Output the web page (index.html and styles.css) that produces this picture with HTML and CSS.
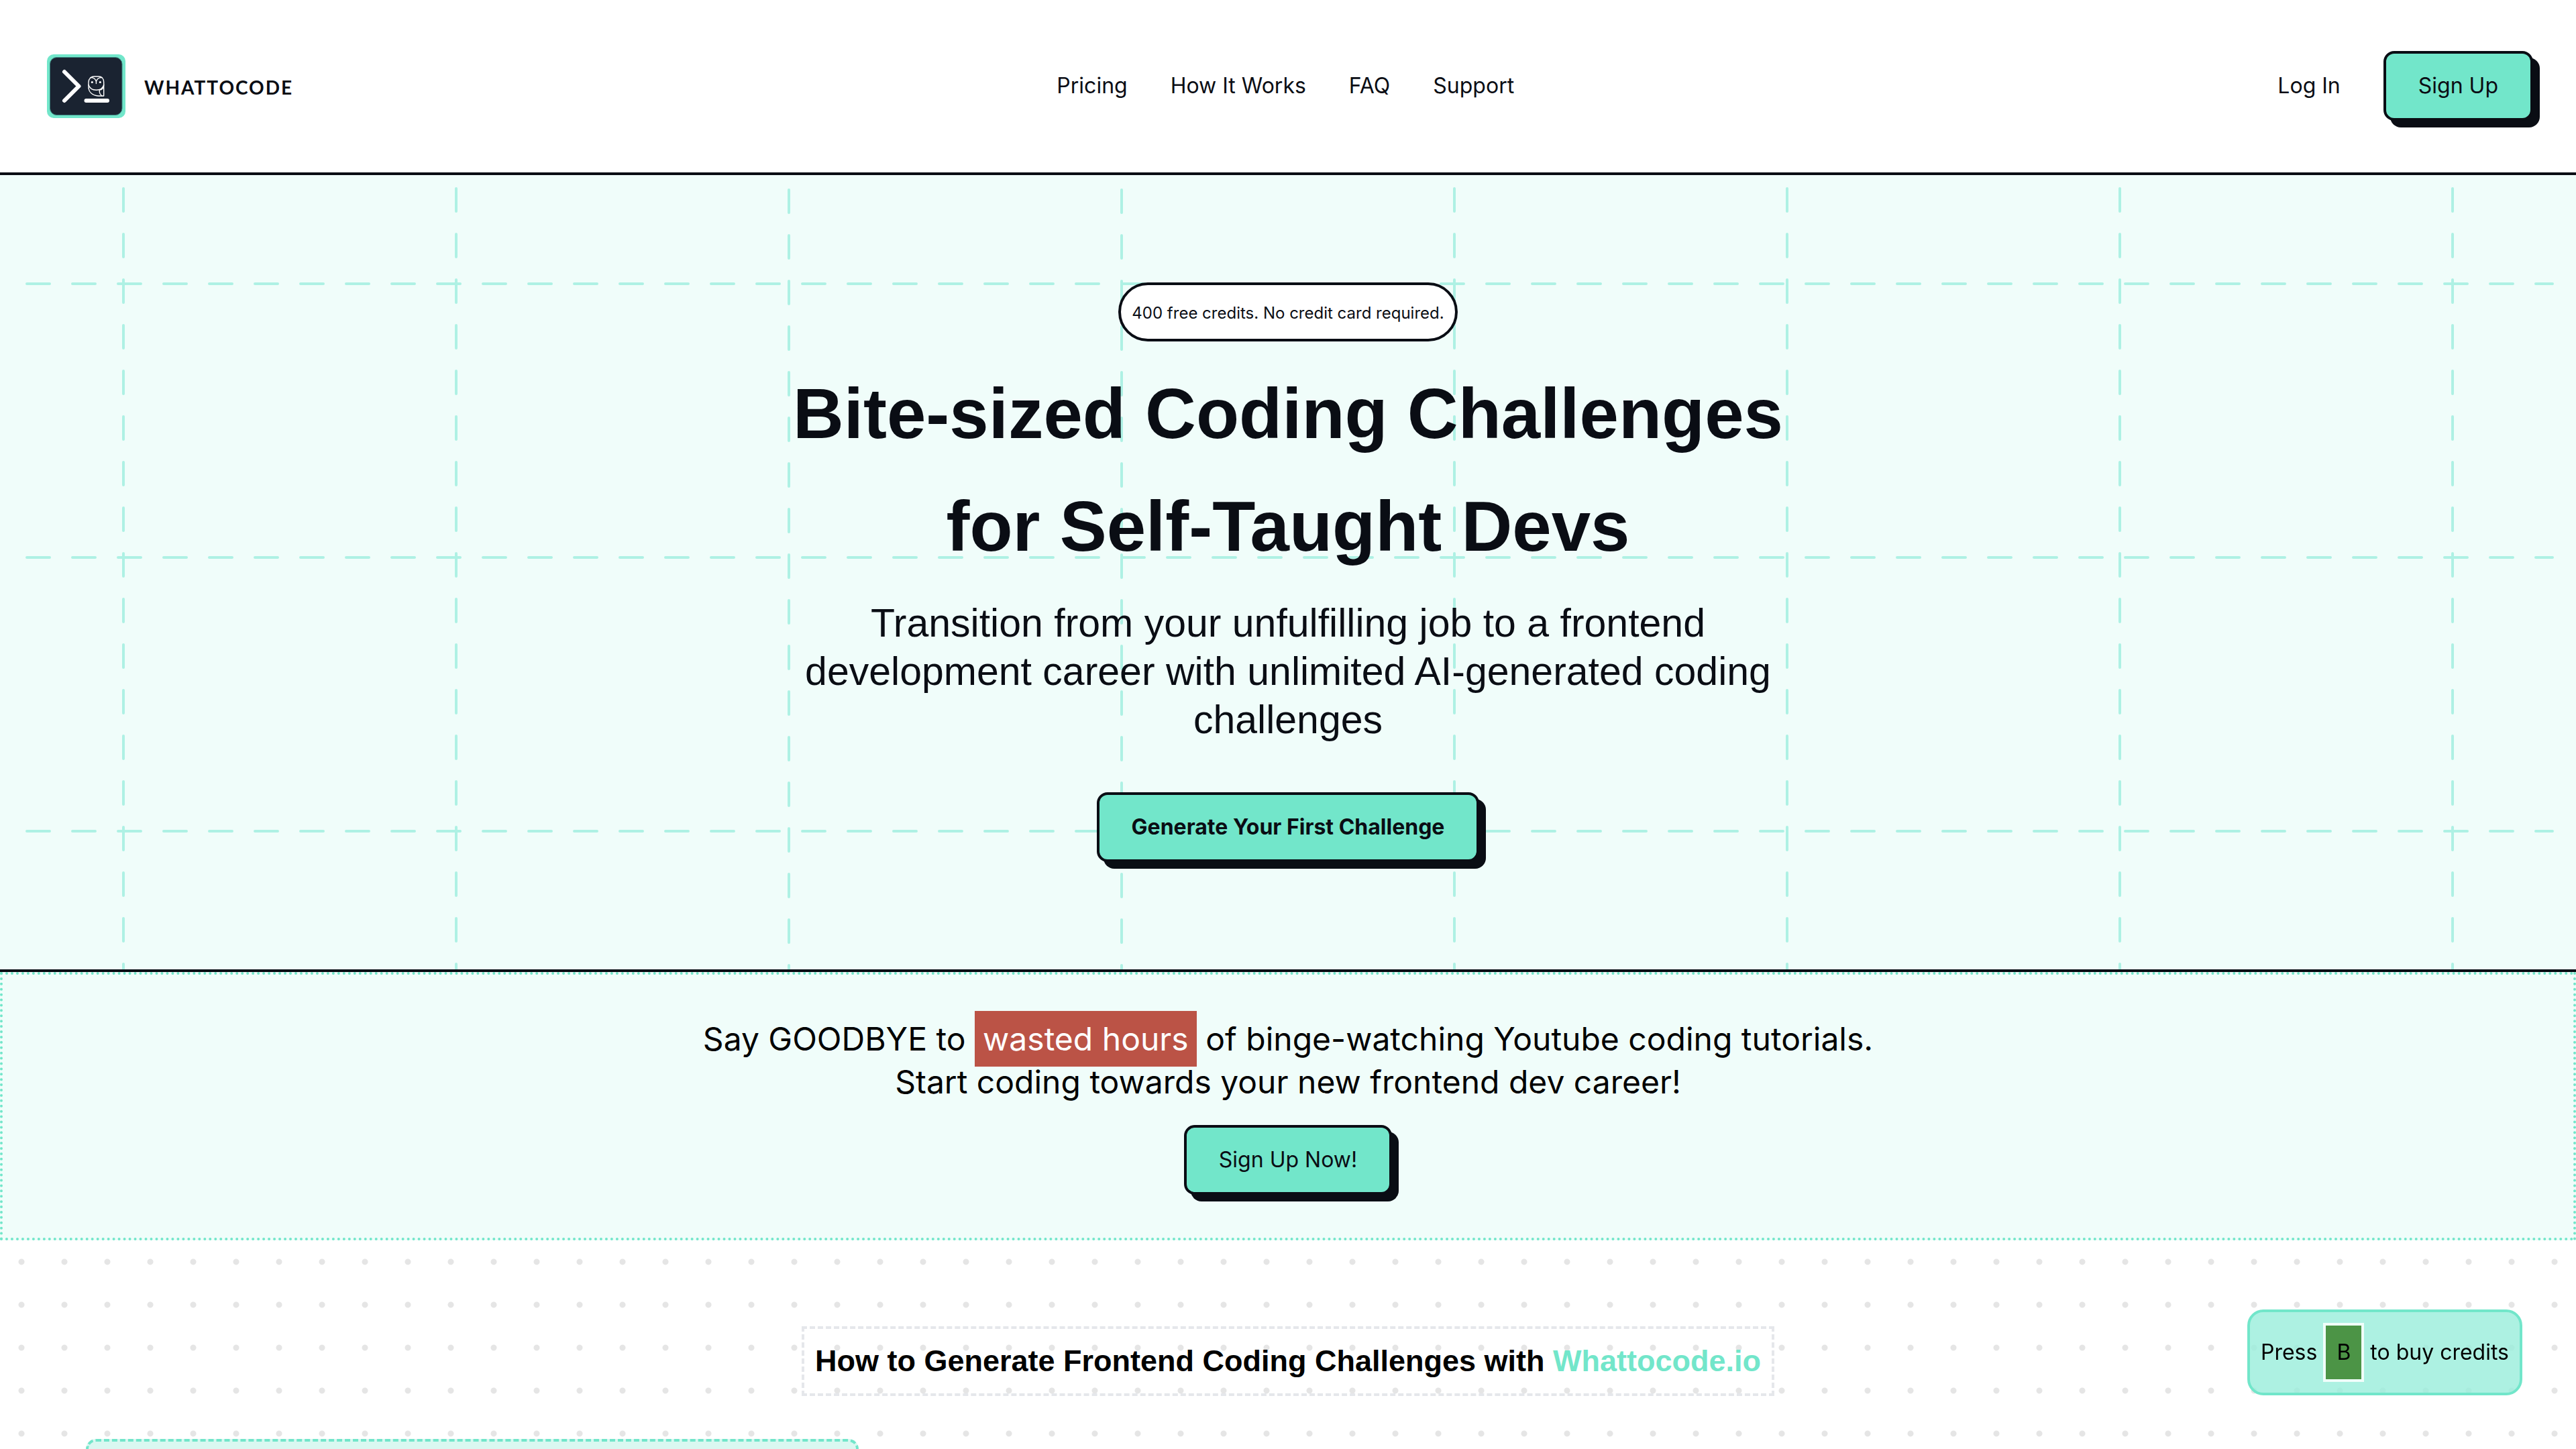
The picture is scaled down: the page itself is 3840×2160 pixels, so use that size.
FILE: index.html
```html
<!DOCTYPE html>
<html lang="en">
<head>
  <meta charset="utf-8">
  <meta name="viewport" content="width=device-width, initial-scale=1">
  <title>Whattocode</title>
  <link rel="stylesheet" href="styles.css">
</head>
<body>
  <header class="header">
    <a class="brand" href="#">
      <svg class="brand-mark" viewBox="0 0 117 95" aria-hidden="true">
        <rect width="117" height="95" rx="10" fill="#72e6ca"/>
        <rect x="4.5" y="4.5" width="107.500" height="86" rx="10" fill="#1a2331" stroke="#3d8580" stroke-width="1"/>
        <g fill="none" stroke="#fff" stroke-linecap="round" stroke-linejoin="round">
          <path stroke-width="6" d="M26 26 47.500 47.500 26 69M58.500 69H90"/>
          <g stroke-width="1.400">
            <path d="M62 51V41.500C62 36 66 33 70.500 33H77C81.500 33 84.700 36 84.700 41.500V62H76.500C67.500 61 62 56 62 48.500"/>
            <path d="M62 45.500C63.500 50.500 68 53.200 73.500 53.200S83.500 50.500 84.700 45.500"/>
            <path d="M65 34.500C69.500 34.500 72.500 37 73.400 40.500V43.500M82 34.500C77.500 34.500 74.300 37 73.400 40.500"/>
            <path d="M78.500 53C77.500 56.500 79.500 60 82 62M84.500 47C84 51 82 53 78.500 53"/>
          </g>
          <path stroke-width="3.200" d="M67.300 41.500h.01M79.300 41.500h.01"/>
        </g>
      </svg>
      <span class="brand-name">WHATTOCODE</span>
    </a>
    <nav class="nav" aria-label="Main">
      <a href="#pricing">Pricing</a>
      <a href="#how-it-works">How It Works</a>
      <a href="#faq">FAQ</a>
      <a href="#support">Support</a>
    </nav>
    <div class="account">
      <a href="#login">Log In</a>
      <button class="button" type="button">Sign Up</button>
    </div>
  </header>

  <main class="main">
    <section class="hero">
      <svg class="hero-grid" viewBox="0 0 3840 1184" preserveAspectRatio="xMidYMin slice" aria-hidden="true">
        <g fill="none" stroke="#aef1e4" stroke-width="4" stroke-linecap="round" stroke-dasharray="34 34">
          <path d="M40 162H3805M40 570H3805M40 978H3805"/>
          <path d="M184 20V1184M680 20V1184M1176 22V1184M1672 22V1184M2168 20V1184M2664 20V1184M3160 20V1184M3656 20V1184"/>
        </g>
      </svg>
      <p class="pill">400 free credits. No credit card required.</p>
      <h1 class="title">Bite-sized Coding Challenges<br>for Self-Taught Devs</h1>
      <p class="subtitle">Transition from your unfulfilling job to a frontend<br>development career with unlimited AI-generated coding<br>challenges</p>
      <button class="button button-strong" type="button">Generate Your First Challenge</button>
    </section>

    <section class="goodbye">
      <p class="pitch">Say GOODBYE to <mark class="wasted">wasted hours</mark> of binge-watching Youtube coding tutorials.<br>Start coding towards your new frontend dev career!</p>
      <button class="button" type="button">Sign Up Now!</button>
    </section>

    <section class="how" id="how-it-works">
      <h2 class="how-title">How to Generate Frontend Coding Challenges with <span class="accent">Whattocode.io</span></h2>
      <div class="steps">
        <article class="step"></article>
      </div>
    </section>
  </main>

  <aside class="hint">Press <kbd class="key">B</kbd> to buy credits</aside>
</body>
</html>
```
FILE: styles.css
```css
:root {
  --ink: #0a0d14;
  --mint: #72e6ca;
  --mist: #f0fdfa;
}

* {
  box-sizing: border-box;
}

body {
  margin: 0;
  min-height: 100vh;
  display: flex;
  flex-direction: column;
  background: #fff;
  color: var(--ink);
  font-family: Inter, sans-serif;
  font-size: 32px;
  line-height: 48px;
}

h1,
h2,
p {
  margin: 0;
}

a {
  color: inherit;
  text-decoration: none;
}

.header {
  display: flex;
  justify-content: space-between;
  align-items: center;
  padding: 76px 64px 77px 70px;
  border-bottom: 4px solid var(--ink);
}

.brand {
  display: flex;
  align-items: center;
  gap: 28px;
}

.brand-mark {
  width: 117px;
  height: 95px;
}

.brand-name {
  font-family: Lato, sans-serif;
  font-size: 28px;
  font-weight: 700;
  letter-spacing: 2px;
  padding-top: 4px;
}

.nav,
.account {
  display: flex;
  align-items: center;
  gap: 64px;
}

.button {
  padding: 24px 48px;
  border: 4px solid var(--ink);
  border-radius: 16px;
  background: var(--mint);
  box-shadow: 10px 10px 0 var(--ink);
  color: var(--ink);
  font: inherit;
  cursor: pointer;
}

.button-strong {
  font-weight: 700;
}

.main {
  flex: 1;
  display: flex;
  flex-direction: column;
}

.hero {
  position: relative;
  display: flex;
  flex-direction: column;
  align-items: center;
  padding: 160px 64px;
  border-bottom: 4px solid var(--ink);
  background: var(--mist);
  text-align: center;
}

.hero > * {
  position: relative;
}

.hero .hero-grid {
  position: absolute;
  inset: 0;
  width: 100%;
  height: 100%;
}

.pill {
  padding: 18px 16px 14px;
  border: 4px solid var(--ink);
  border-radius: 44px;
  background: #fff;
  font-size: 24px;
}

.title {
  margin-top: 24px;
  font-family: "Liberation Sans", sans-serif;
  font-size: 105px;
  font-weight: 700;
  line-height: 168px;
}

.subtitle {
  margin: 24px 0 72px;
  font-family: "Liberation Sans", sans-serif;
  font-size: 59px;
  line-height: 72px;
}

.goodbye {
  display: flex;
  flex-direction: column;
  align-items: center;
  gap: 32px;
  padding: 64px;
  border: 4px dotted var(--mint);
  background: var(--mist);
  text-align: center;
}

.pitch {
  color: #000;
  font-size: 48px;
  line-height: 64px;
}

.wasted {
  padding: 12px;
  background: #bb5346;
  color: #fff;
}

.how {
  flex: 1;
  display: flex;
  flex-direction: column;
  align-items: center;
  gap: 64px;
  padding: 128px 128px 0;
  background: radial-gradient(circle, #e5e5e5 4px, transparent 5px) 0 0 / 64px 64px;
}

.how-title {
  padding: 16px;
  border: 4px dashed #e5e7eb;
  color: #000;
  font-family: "Liberation Sans", sans-serif;
  font-size: 45px;
  font-weight: 700;
  line-height: 64px;
}

.accent {
  color: var(--mint);
}

.steps {
  flex: 1;
  align-self: stretch;
  display: grid;
  grid-template-columns: repeat(3, 1fr);
  gap: 64px;
}

.step {
  border: 4px dashed var(--mint);
  border-bottom: 0;
  border-radius: 16px 16px 0 0;
  background: #daf8f1;
}

.hint {
  position: fixed;
  right: 80px;
  bottom: 80px;
  padding: 36px 16px;
  border: 4px solid var(--mint);
  border-radius: 24px;
  background: rgb(153 237 219 / 80%);
  color: #000;
}

.key {
  display: inline-block;
  margin: -20px 0;
  padding: 16px;
  border: 4px solid var(--mist);
  background: #4c9446;
  font: inherit;
}
```
